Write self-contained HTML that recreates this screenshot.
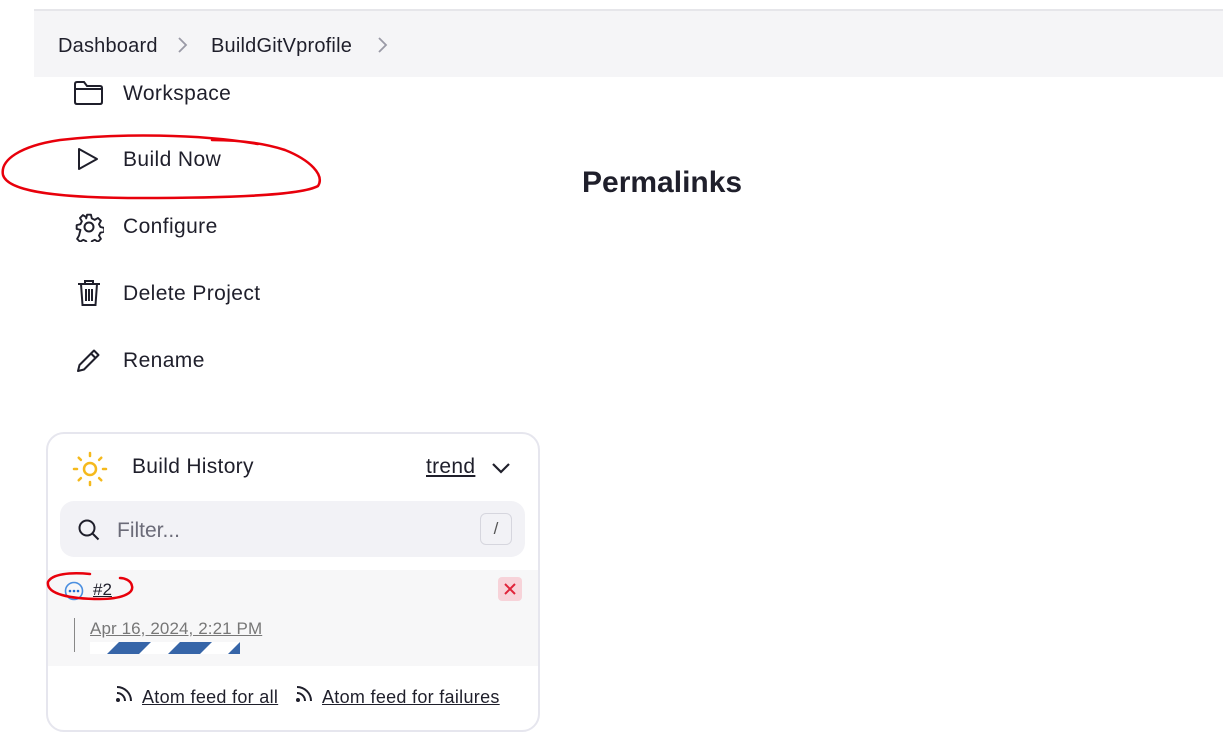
<!DOCTYPE html>
<html><head><meta charset="utf-8"><style>
*{margin:0;padding:0;box-sizing:border-box}
body{width:1223px;height:746px;background:#fff;font-family:"Liberation Sans",sans-serif;color:#1f1f2b;position:relative;overflow:hidden}
.abs{position:absolute}
.bc{left:34px;top:9px;width:1189px;height:68px;background:#f5f5f7;border-top:2px solid #e6e6ea}
.bct{font-size:20px;top:35px;letter-spacing:.2px}
.item{font-size:21px;left:123px;letter-spacing:.4px}
.card{left:46px;top:432px;width:494px;height:300px;border:2px solid #e6e6ee;border-radius:18px;overflow:hidden}
.f{font-size:18px;letter-spacing:.3px;text-decoration:underline}
</style></head><body>
<div class="abs bc"></div>
<div class="abs bct" style="left:58px">Dashboard</div>
<svg class="abs" style="left:176px;top:36px" width="14" height="18"><path d="M3 2l7 7-7 7" stroke="#9a9aa6" stroke-width="1.8" fill="none"/></svg>
<div class="abs bct" style="left:211px">BuildGitVprofile</div>
<svg class="abs" style="left:376px;top:36px" width="14" height="18"><path d="M3 2l7 7-7 7" stroke="#9a9aa6" stroke-width="1.8" fill="none"/></svg>

<svg class="abs" style="left:72px;top:79px" width="34" height="28"><path d="M3 5q0-2 2-2h7l3 4h13q2 0 2 2v14q0 2-2 2H5q-2 0-2-2zM3 10h28" stroke="#1f1f2b" stroke-width="2" fill="none"/></svg>
<div class="abs item" style="top:82px">Workspace</div>
<svg class="abs" style="left:76px;top:146px" width="26" height="26"><path d="M3 3l18 10-18 10z" stroke="#1f1f2b" stroke-width="2" fill="none" stroke-linejoin="round"/></svg>
<div class="abs item" style="top:148px">Build Now</div>
<svg class="abs" style="left:74px;top:212px" width="30" height="30"><circle cx="15" cy="15" r="4.5" stroke="#1f1f2b" stroke-width="2" fill="none"/><path d="M13 2h4l1 4 3 1.5 3.5-2 3 3-2 3.5 1.5 3 4 1v4l-4 1-1.5 3 2 3.5-3 3-3.5-2-3 1.5-1 4h-4l-1-4-3-1.5-3.5 2-3-3 2-3.5L6 18l-4-1v-4l4-1 1.5-3-2-3.5 3-3 3.5 2L12 6z" transform="scale(.95) translate(.8 .8)" stroke="#1f1f2b" stroke-width="2" fill="none" stroke-linejoin="round"/></svg>
<div class="abs item" style="top:215px">Configure</div>
<svg class="abs" style="left:75px;top:278px" width="28" height="30"><path d="M3 6h22M10 6V3h8v3M6 6l1.5 21h13L22 6M11 11v12M14 11v12M17 11v12" stroke="#1f1f2b" stroke-width="2" fill="none"/></svg>
<div class="abs item" style="top:282px">Delete Project</div>
<svg class="abs" style="left:74px;top:345px" width="30" height="30"><path d="M4 26l1.5-6L20 5.5l4.5 4.5L10 24.5zM17 8.5l4.5 4.5" stroke="#1f1f2b" stroke-width="2" fill="none" stroke-linejoin="round"/></svg>
<div class="abs item" style="top:349px">Rename</div>

<div class="abs" style="left:582px;top:166px;font-size:30px;font-weight:bold">Permalinks</div>

<div class="abs card">
<div class="abs" style="left:0;top:136px;width:494px;height:96px;background:#f7f7f8"></div>
</div>
<svg class="abs" style="left:72px;top:451px" width="36" height="36"><circle cx="18" cy="18" r="6" stroke="#f5b91c" stroke-width="2.5" fill="none"/><g stroke="#f5b91c" stroke-width="2.5" stroke-linecap="round"><path d="M18 2v3M18 31v3M2 18h3M31 18h3M6.7 6.7l2.2 2.2M27.1 27.1l2.2 2.2M6.7 29.3l2.2-2.2M27.1 8.9l2.2-2.2"/></g></svg>
<div class="abs" style="left:132px;top:455px;font-size:21px;letter-spacing:.3px">Build History</div>
<div class="abs" style="left:426px;top:455px;font-size:21px;letter-spacing:.3px;text-decoration:underline">trend</div>
<svg class="abs" style="left:490px;top:459px" width="22" height="18"><path d="M3 5l8 8 8-8" stroke="#1f1f2b" stroke-width="2.2" fill="none"/></svg>
<div class="abs" style="left:60px;top:501px;width:465px;height:56px;background:#f2f2f6;border-radius:14px"></div>
<svg class="abs" style="left:77px;top:518px" width="26" height="26"><circle cx="10" cy="10" r="7.5" stroke="#1f1f2b" stroke-width="2" fill="none"/><path d="M15.5 15.5l6 6" stroke="#1f1f2b" stroke-width="2"/></svg>
<div class="abs" style="left:117px;top:519px;font-size:21px;color:#6b6b78">Filter...</div>
<div class="abs" style="left:480px;top:513px;width:32px;height:32px;border:1.5px solid #d6d6de;border-radius:6px;text-align:center;line-height:30px;color:#555;font-size:17px">/</div>

<svg class="abs" style="left:64px;top:581px" width="22" height="22"><circle cx="10" cy="10" r="8.5" stroke="#4b8fe0" stroke-width="1.6" fill="none"/><g fill="#1f6ed4"><circle cx="6" cy="10" r="1.3"/><circle cx="10" cy="10" r="1.3"/><circle cx="14" cy="10" r="1.3"/></g></svg>
<div class="abs" style="left:93px;top:580px;font-size:17px;text-decoration:underline">#2</div>
<div class="abs" style="left:498px;top:577px;width:24px;height:24px;background:#f7d3d9;border-radius:4px"></div>
<svg class="abs" style="left:498px;top:577px" width="24" height="24"><path d="M7 7l10 10M17 7L7 17" stroke="#e0243a" stroke-width="2"/></svg>
<div class="abs" style="left:74px;top:618px;width:1px;height:34px;background:#888"></div>
<div class="abs" style="left:90px;top:619px;font-size:17px;color:#777;text-decoration:underline;letter-spacing:.1px">Apr 16, 2024, 2:21 PM</div>
<svg class="abs" style="left:90px;top:642px" width="150" height="12"><rect width="150" height="12" fill="#fff"/><g fill="#3665a8"><path d="M17 12l12-12h32l-12 12zM78 12l12-12h32l-12 12zM138 12l12-12v12z"/></g></svg>

<svg class="abs" style="left:114px;top:684px" width="20" height="20"><circle cx="4" cy="16" r="2" fill="#1f1f2b"/><path d="M3 9a8 8 0 0 1 8 8M3 3a14 14 0 0 1 14 14" stroke="#1f1f2b" stroke-width="2" fill="none"/></svg>
<div class="abs f" style="left:142px;top:687px">Atom feed for all</div>
<svg class="abs" style="left:294px;top:684px" width="20" height="20"><circle cx="4" cy="16" r="2" fill="#1f1f2b"/><path d="M3 9a8 8 0 0 1 8 8M3 3a14 14 0 0 1 14 14" stroke="#1f1f2b" stroke-width="2" fill="none"/></svg>
<div class="abs f" style="left:322px;top:687px">Atom feed for failures</div>

<svg class="abs" style="left:0;top:0" width="1223" height="746"><g stroke="#e8000b" stroke-width="2.5" fill="none" stroke-linecap="round">
<path d="M258 144C200 134 120 133 60 140C20 146 0 160 3 175C8 192 60 198 140 198C220 198 300 196 318 186C325 175 310 160 285 150C260 142 235 140 212 140"/>
<path d="M90 574C70 572 52 574 48 582C46 594 70 599 100 599C120 599 134 594 132 586C131 580 124 578 120 578"/>
</g></svg>
</body></html>
